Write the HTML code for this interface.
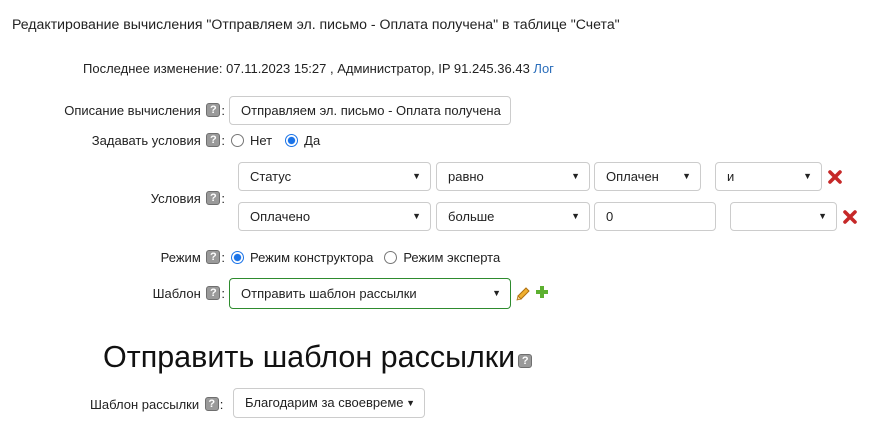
<!DOCTYPE html>
<html><head><meta charset="utf-8"><style>
*{box-sizing:border-box;margin:0;padding:0}
body{width:870px;height:430px;background:#fff;font-family:"Liberation Sans","DejaVu Sans",sans-serif;font-size:13px;color:#222;position:relative;overflow:hidden}
.a{position:absolute;white-space:nowrap}
.h{display:inline-block;width:14px;height:14px;background:#9a9a9a;border:1px solid #6f6f6f;border-radius:3px;color:#fff;font-size:11px;font-weight:bold;text-align:center;line-height:12px;vertical-align:-1px;position:relative;top:-3px;margin:0 1px 0 2px}
.box{position:absolute;border:1px solid #ccc;border-radius:4px;background:#fff;padding-left:11px;font-size:13px;white-space:nowrap;overflow:hidden}
.sel::after{content:"▼";position:absolute;right:9px;font-size:9px;color:#222}
.rad{display:inline-block;width:13px;height:13px;border:1px solid #777;border-radius:50%;vertical-align:-2px;margin-right:6px}
.rad.on{border:1px solid #1a73e8;background:radial-gradient(circle,#1a73e8 3.3px,#fff 4px)}
.x{position:absolute}
</style></head><body>
<div class="a" style="left:12px;top:16px;font-size:14.1px">Редактирование вычисления "Отправляем эл. письмо - Оплата получена" в таблице "Счета"</div>
<div class="a" style="left:83px;top:61px">Последнее изменение: 07.11.2023 15:27 , Администратор, IP 91.245.36.43 <span style="color:#2a6ebb">Лог</span></div>

<div class="a" style="right:645px;top:103px">Описание вычисления <span class="h">?</span>:</div>
<div class="box" style="left:229px;top:96px;width:282px;height:29px;line-height:27px">Отправляем эл. письмо - Оплата получена</div>

<div class="a" style="right:645px;top:133px">Задавать условия <span class="h">?</span>:</div>
<div class="a" style="left:231px;top:133px"><span class="rad"></span>Нет<span style="display:inline-block;width:13px"></span><span class="rad on"></span>Да</div>

<div class="a" style="right:645px;top:191px">Условия <span class="h">?</span>:</div>
<div class="box sel" style="left:238px;top:162px;width:193px;height:29px;line-height:27px">Статус</div>
<div class="box sel" style="left:436px;top:162px;width:154px;height:29px;line-height:27px">равно</div>
<div class="box sel" style="left:594px;top:162px;width:107px;height:29px;line-height:27px">Оплачен</div>
<div class="box sel" style="left:715px;top:162px;width:107px;height:29px;line-height:27px">и</div>
<svg class="x" style="left:828px;top:170px" width="14" height="14" viewBox="0 0 14 14"><path d="M2 2L12 12M12 2L2 12" stroke="#c62828" stroke-width="3.6" stroke-linecap="round"/></svg>
<div class="box sel" style="left:238px;top:202px;width:193px;height:29px;line-height:27px">Оплачено</div>
<div class="box sel" style="left:436px;top:202px;width:154px;height:29px;line-height:27px">больше</div>
<div class="box" style="left:594px;top:202px;width:122px;height:29px;line-height:27px">0</div>
<div class="box sel" style="left:730px;top:202px;width:107px;height:29px;line-height:27px"></div>
<svg class="x" style="left:843px;top:210px" width="14" height="14" viewBox="0 0 14 14"><path d="M2 2L12 12M12 2L2 12" stroke="#c62828" stroke-width="3.6" stroke-linecap="round"/></svg>

<div class="a" style="right:645px;top:250px">Режим <span class="h">?</span>:</div>
<div class="a" style="left:231px;top:250px"><span class="rad on"></span>Режим конструктора<span style="display:inline-block;width:11px"></span><span class="rad"></span>Режим эксперта</div>

<div class="a" style="right:645px;top:286px">Шаблон <span class="h">?</span>:</div>
<div class="box sel" style="left:229px;top:278px;width:282px;height:31px;line-height:29px;border-color:#2e8b2e">Отправить шаблон рассылки</div>
<svg class="x" style="left:515px;top:285px" width="17" height="17" viewBox="0 0 17 17"><path d="M3 11L11 3L14 6L6 14Z" fill="#f0b030" stroke="#b07010"/><path d="M3 11L6 14L2 15Z" fill="#f5d5a0" stroke="#b07010" stroke-width=".8"/></svg>
<svg class="x" style="left:535px;top:285px" width="14" height="14" viewBox="0 0 14 14"><path d="M7 1V13M1 7H13" stroke="#5cb030" stroke-width="4"/></svg>

<div class="a" style="left:103px;top:340px;font-size:30.5px;color:#111">Отправить шаблон рассылки<span class="h" style="vertical-align:3px;top:0;margin-left:3px">?</span></div>

<div class="a" style="left:90px;top:397px">Шаблон рассылки <span class="h">?</span>:</div>
<div class="box sel" style="left:233px;top:388px;width:192px;height:30px;line-height:28px">Благодарим за своевреме</div>
</body></html>
